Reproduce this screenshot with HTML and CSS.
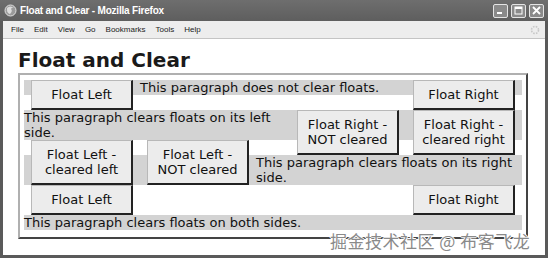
FILE: index.html
```html
<!DOCTYPE html>
<html lang="en">
<head>
    <meta charset="UTF-8">
    <title>Float and Clear</title>
    <link rel="stylesheet" href="styles.css">
</head>
<body>
    <div class="window">
        <div class="titlebar">
            <svg class="app-icon" width="13" height="13" viewBox="0 0 13 13">
                <circle cx="6.5" cy="6.5" r="5.5" fill="#9a9a9a" stroke="#e0e0e0" stroke-width="1"/>
                <path d="M3 4 Q6 1 10 4 Q8 3 7 5 Q9 7 6 10 Q3 9 3 6 Z" fill="#dcdcdc"/>
            </svg>
            <span class="title">Float and Clear - Mozilla Firefox</span>
            <div class="controls">
                <span class="ctl"><svg width="9" height="9" viewBox="0 0 9 9"><rect x="1" y="6" width="5" height="2" fill="#fff"/></svg></span>
                <span class="ctl"><svg width="9" height="9" viewBox="0 0 9 9"><rect x="1" y="1" width="7" height="7" fill="none" stroke="#fff" stroke-width="1"/><rect x="1" y="1" width="7" height="2" fill="#fff"/></svg></span>
                <span class="ctl"><svg width="9" height="9" viewBox="0 0 9 9"><path d="M1 1 L8 8 M8 1 L1 8" stroke="#fff" stroke-width="1.8"/></svg></span>
            </div>
        </div>
        <div class="menubar">
            <span>File</span>
            <span>Edit</span>
            <span>View</span>
            <span>Go</span>
            <span>Bookmarks</span>
            <span>Tools</span>
            <span>Help</span>
            <svg class="throbber" width="10" height="10" viewBox="0 0 10 10">
                <circle cx="5" cy="5" r="3.5" fill="none" stroke="#c8c8c8" stroke-width="1.6" stroke-dasharray="1.6 1.2"/>
            </svg>
        </div>
        <div class="viewport">
            <h1>Float and Clear</h1>
            <div class="demo">
                <div class="box float-left">Float Left</div>
                <div class="box float-right">Float Right</div>
                <p>This paragraph does not clear floats.</p>

                <div class="box float-right clear-right">Float Right - cleared right</div>
                <div class="box float-right">Float Right - NOT cleared</div>
                <p class="clear-left">This paragraph clears floats on its left side.</p>

                <div class="box float-left clear-left">Float Left - cleared left</div>
                <div class="box float-left">Float Left - NOT cleared</div>
                <p class="clear-right">This paragraph clears floats on its right side.</p>

                <div class="box float-left">Float Left</div>
                <div class="box float-right">Float Right</div>
                <p class="clear-both">This paragraph clears floats on both sides.</p>
            </div>
        </div>
    </div>
    <div class="watermark">掘金技术社区 @ 布客飞龙</div>
</body>
</html>
```

FILE: styles.css
```css
html, body {
    margin: 0;
    padding: 0;
    background-color: #fff;
}
body {
    width: 550px;
    height: 259px;
    position: relative;
    overflow: hidden;
}
.window {
    width: 548px;
    height: 258px;
    box-sizing: border-box;
    background-color: #5a5a5a;
    padding: 0 3px 3px 3px;
    display: flex;
    flex-direction: column;
}
.titlebar {
    height: 21px;
    display: flex;
    align-items: center;
    margin: 0 -3px;
    padding: 0 4px;
    background: linear-gradient(#6e6e6e, #5e5e5e);
}
.app-icon {
    margin-right: 3px;
}
.title {
    color: #fff;
    font: bold 10px "Liberation Sans", Arial, sans-serif;
    letter-spacing: -0.2px;
}
.controls {
    margin-left: auto;
    display: flex;
    gap: 3px;
}
.ctl {
    width: 15px;
    height: 14px;
    box-sizing: border-box;
    border: 1px solid #e4e4e4;
    border-radius: 2px;
    background-color: #8a8a8a;
    display: flex;
    align-items: center;
    justify-content: center;
}
.menubar {
    height: 17px;
    display: flex;
    align-items: center;
    gap: 10px;
    padding: 0 5px 0 8px;
    background-color: #ededed;
    border-bottom: 1px solid #c4c4c4;
    font: 8px "Liberation Sans", Arial, sans-serif;
    color: #222;
}
.throbber {
    margin-left: auto;
}
.viewport {
    flex: 1;
    background-color: #fff;
    padding: 10px 0 0 15px;
}
h1 {
    margin: 0 0 1px 0;
    font: bold 20px/23px "DejaVu Sans", Verdana, sans-serif;
    color: #1a1a1a;
}
.demo {
    width: 510px;
    box-sizing: border-box;
    border: 2px solid;
    border-color: #b0b0b0 #444 #444 #b0b0b0;
    padding: 5px 4px 7px 4px;
    font: 13px/15px "DejaVu Sans", Verdana, sans-serif;
    color: #111;
}
.demo p {
    margin: 0;
    background-color: #d3d3d3;
}
.box {
    width: 102px;
    box-sizing: border-box;
    padding: 6px 2px;
    margin: 0 7px;
    text-align: center;
    background-color: #ececec;
    border-style: solid;
    border-width: 1px 2px 2px 1px;
    border-color: #b8b8b8 #222 #222 #b8b8b8;
}
.float-left {
    float: left;
}
.float-right {
    float: right;
}
.clear-left {
    clear: left;
}
.clear-right {
    clear: right;
}
.clear-both {
    clear: both;
}
.watermark {
    position: absolute;
    left: 330px;
    top: 228px;
    font: 17px "Noto Sans CJK SC", sans-serif;
    letter-spacing: 0.5px;
    color: #8a8a8a;
    text-shadow: 1px 0 #fff, -1px 0 #fff, 0 1px #fff, 0 -1px #fff;
    white-space: nowrap;
}
```
